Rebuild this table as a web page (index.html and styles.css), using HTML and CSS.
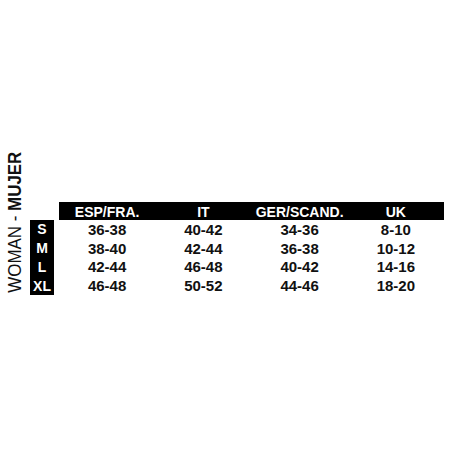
FILE: index.html
```html
<!DOCTYPE html>
<html>
<head>
<meta charset="utf-8">
<link rel="stylesheet" href="styles.css">
</head>
<body>
<div class="chart">
  <div class="label"><span class="reg">WOMAN - </span><span class="bold">MUJER</span></div>
  <div class="table">
    <div class="blank"></div><div class="blank"></div>
    <div class="head">ESP/FRA.</div><div class="head">IT</div><div class="head">GER/SCAND.</div><div class="head">UK</div>

    <div class="size">S</div><div class="blank"></div>
    <div class="cell">36-38</div><div class="cell">40-42</div><div class="cell">34-36</div><div class="cell">8-10</div>

    <div class="size">M</div><div class="blank"></div>
    <div class="cell">38-40</div><div class="cell">42-44</div><div class="cell">36-38</div><div class="cell">10-12</div>

    <div class="size">L</div><div class="blank"></div>
    <div class="cell">42-44</div><div class="cell">46-48</div><div class="cell">40-42</div><div class="cell">14-16</div>

    <div class="size">XL</div><div class="blank"></div>
    <div class="cell">46-48</div><div class="cell">50-52</div><div class="cell">44-46</div><div class="cell">18-20</div>
  </div>
</div>
</body>
</html>
```
FILE: styles.css
```css
html, body {
  margin: 0;
  padding: 0;
  background: #fff;
}
body {
  font-family: "Liberation Sans", Arial, sans-serif;
  color: #000;
  width: 450px;
  height: 450px;
}
.chart {
  display: flex;
  align-items: flex-end;
  height: 295px;
  box-sizing: border-box;
  padding-left: 6px;
}
.label {
  writing-mode: vertical-rl;
  transform: rotate(180deg) scaleY(0.89);
  transform-origin: 50% 50%;
  font-size: 19px;
  line-height: 18px;
  width: 18px;
  margin-right: 6px;
  margin-bottom: -6.5px;
  white-space: nowrap;
  color: #111;
}
.label .reg { font-weight: 400; }
.label .bold { font-weight: 700; }
.table {
  display: grid;
  grid-template-columns: 24px 5px repeat(4, 96.25px);
  grid-template-rows: 18px repeat(4, 18.75px);
}
.head {
  background: #000;
  color: #fff;
  font-weight: 700;
  font-size: 14px;
  display: flex;
  align-items: center;
  justify-content: center;
  padding-top: 1px;
}
.size {
  background: #000;
  color: #fff;
  font-weight: 700;
  font-size: 14px;
  display: flex;
  align-items: center;
  justify-content: center;
}
.cell {
  font-weight: 700;
  font-size: 15px;
  display: flex;
  align-items: center;
  justify-content: center;
  color: #111;
}
```
